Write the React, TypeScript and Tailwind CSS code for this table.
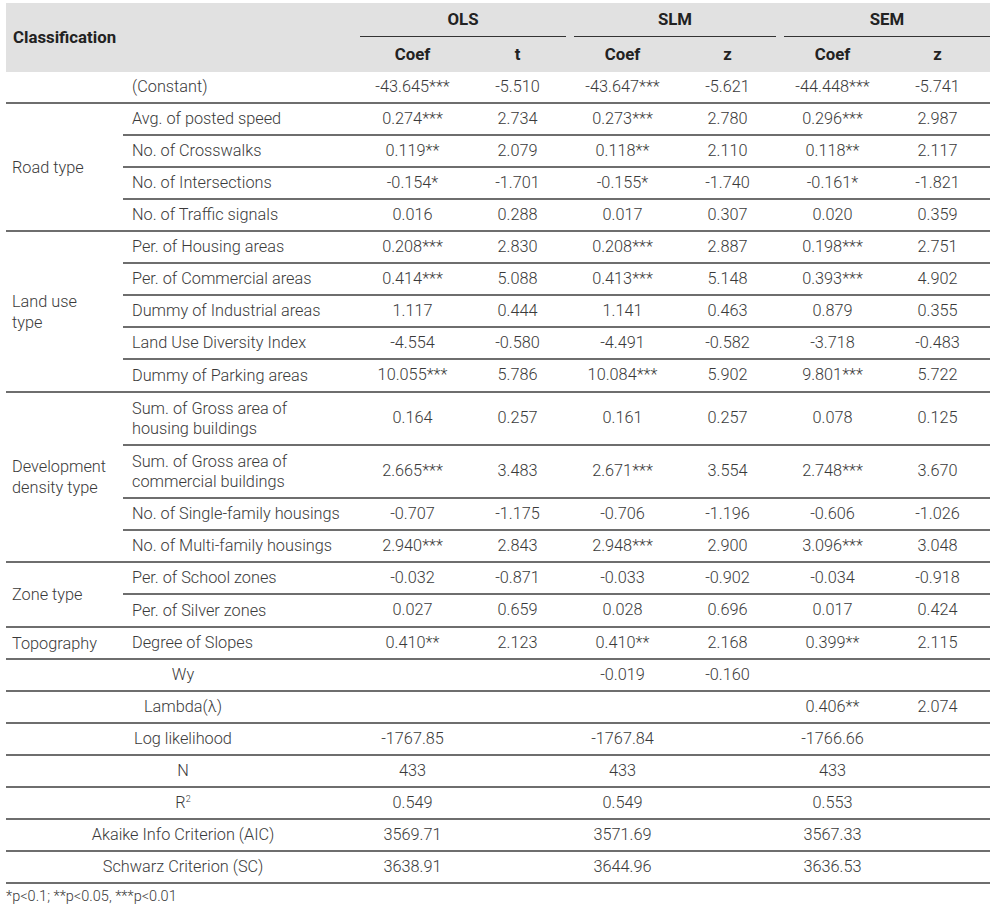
import type { ReactNode } from 'react'

type Row = { label: ReactNode; vals: string[]; tall?: boolean; extra?: boolean }
type Group = { name: ReactNode; rows: Row[] }

const groups: Group[] = [
  { name: '', rows: [{ label: '(Constant)', vals: ['-43.645***', '-5.510', '-43.647***', '-5.621', '-44.448***', '-5.741'] }] },
  {
    name: 'Road type',
    rows: [
      { label: 'Avg. of posted speed', vals: ['0.274***', '2.734', '0.273***', '2.780', '0.296***', '2.987'] },
      { label: 'No. of Crosswalks', vals: ['0.119**', '2.079', '0.118**', '2.110', '0.118**', '2.117'] },
      { label: 'No. of Intersections', vals: ['-0.154*', '-1.701', '-0.155*', '-1.740', '-0.161*', '-1.821'] },
      { label: 'No. of Traffic signals', vals: ['0.016', '0.288', '0.017', '0.307', '0.020', '0.359'] },
    ],
  },
  {
    name: (
      <>
        Land use
        <br />
        type
      </>
    ),
    rows: [
      { label: 'Per. of Housing areas', vals: ['0.208***', '2.830', '0.208***', '2.887', '0.198***', '2.751'] },
      { label: 'Per. of Commercial areas', vals: ['0.414***', '5.088', '0.413***', '5.148', '0.393***', '4.902'] },
      { label: 'Dummy of Industrial areas', vals: ['1.117', '0.444', '1.141', '0.463', '0.879', '0.355'] },
      { label: 'Land Use Diversity Index', vals: ['-4.554', '-0.580', '-4.491', '-0.582', '-3.718', '-0.483'] },
      { label: 'Dummy of Parking areas', vals: ['10.055***', '5.786', '10.084***', '5.902', '9.801***', '5.722'], extra: true },
    ],
  },
  {
    name: (
      <>
        Development
        <br />
        density type
      </>
    ),
    rows: [
      {
        label: (
          <>
            Sum. of Gross area of
            <br />
            housing buildings
          </>
        ),
        vals: ['0.164', '0.257', '0.161', '0.257', '0.078', '0.125'],
        tall: true,
      },
      {
        label: (
          <>
            Sum. of Gross area of
            <br />
            commercial buildings
          </>
        ),
        vals: ['2.665***', '3.483', '2.671***', '3.554', '2.748***', '3.670'],
        tall: true,
      },
      { label: 'No. of Single-family housings', vals: ['-0.707', '-1.175', '-0.706', '-1.196', '-0.606', '-1.026'] },
      { label: 'No. of Multi-family housings', vals: ['2.940***', '2.843', '2.948***', '2.900', '3.096***', '3.048'] },
    ],
  },
  {
    name: 'Zone type',
    rows: [
      { label: 'Per. of School zones', vals: ['-0.032', '-0.871', '-0.033', '-0.902', '-0.034', '-0.918'] },
      { label: 'Per. of Silver zones', vals: ['0.027', '0.659', '0.028', '0.696', '0.017', '0.424'], extra: true },
    ],
  },
  { name: 'Topography', rows: [{ label: 'Degree of Slopes', vals: ['0.410**', '2.123', '0.410**', '2.168', '0.399**', '2.115'] }] },
]

const stats: Row[] = [
  { label: 'Wy', vals: ['', '', '-0.019', '-0.160', '', ''] },
  { label: 'Lambda(λ)', vals: ['', '', '', '', '0.406**', '2.074'] },
  { label: 'Log likelihood', vals: ['-1767.85', '', '-1767.84', '', '-1766.66', ''] },
  { label: 'N', vals: ['433', '', '433', '', '433', ''] },
  {
    label: (
      <>
        R<sup className="text-[9px]">2</sup>
      </>
    ),
    vals: ['0.549', '', '0.549', '', '0.553', ''],
  },
  { label: 'Akaike Info Criterion (AIC)', vals: ['3569.71', '', '3571.69', '', '3567.33', ''] },
  { label: 'Schwarz Criterion (SC)', vals: ['3638.91', '', '3644.96', '', '3636.53', ''] },
]

const line = 'border-b-2 border-[#6e6e6e]'

function Values({ vals }: { vals: string[] }) {
  return (
    <>
      {vals.map((v, i) => (
        <div key={i} className="flex items-center justify-center">
          {v}
        </div>
      ))}
    </>
  )
}

function rowHeight(r: Row, last: boolean) {
  if (r.tall) return last ? 'h-[50px]' : 'h-[53px]'
  if (last) return r.extra ? 'h-[31px]' : 'h-[30px]'
  return 'h-[32px]'
}

export default function App() {
  return (
    <div className="min-h-screen bg-white pt-[3px] pl-[6px] font-[Roboto,sans-serif] text-[16.3px] font-light text-[#3a3a3a]">
      <div className="w-[984px]">
        {/* cabecera gris: modelo arriba, coeficiente / estadístico abajo */}
        <div className="flex h-[69px] bg-[#e1e1e1] text-[16.8px] font-bold text-[#222]">
          <div className="flex w-[354px] items-center pl-[7px]">Classification</div>
          <div className="flex w-[630px] flex-col">
            <div className="grid h-[34px] grid-cols-3">
              <div className="mr-[4px] flex items-center justify-center border-b border-[#333]">OLS</div>
              <div className="mx-[4px] flex items-center justify-center border-b border-[#333]">SLM</div>
              <div className="ml-[4px] flex items-center justify-center border-b border-[#333]">SEM</div>
            </div>
            <div className="grid flex-1 grid-cols-6">
              {['Coef', 't', 'Coef', 'z', 'Coef', 'z'].map((h, i) => (
                <div key={i} className="flex items-center justify-center">
                  {h}
                </div>
              ))}
            </div>
          </div>
        </div>

        {groups.map((g, gi) => (
          <div key={gi} className={`flex ${line}`}>
            <div className="flex w-[117px] items-center pl-[6px] leading-[21px]">{g.name}</div>
            <div className="w-[867px]">
              {g.rows.map((r, ri) => {
                const last = ri === g.rows.length - 1
                return (
                  <div
                    key={ri}
                    className={`grid grid-cols-[237px_repeat(6,105px)] ${rowHeight(r, last)} ${last ? '' : line}`}
                  >
                    <div className="flex items-center pl-[9px] leading-[20px]">{r.label}</div>
                    <Values vals={r.vals} />
                  </div>
                )
              })}
            </div>
          </div>
        ))}

        {stats.map((r, i) => (
          <div key={i} className={`grid h-[32px] grid-cols-[354px_repeat(6,105px)] ${line}`}>
            <div className="flex items-center justify-center">{r.label}</div>
            <Values vals={r.vals} />
          </div>
        ))}

        <p className="mt-[3px] text-[14.5px] leading-[20px]">*p&lt;0.1; **p&lt;0.05, ***p&lt;0.01</p>
      </div>
    </div>
  )
}
